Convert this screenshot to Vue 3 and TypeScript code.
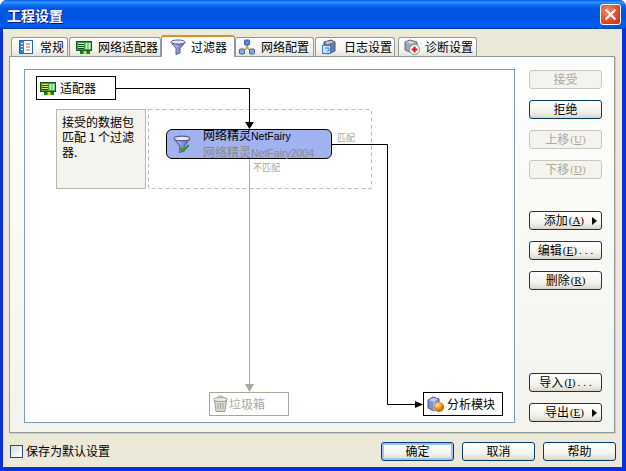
<script setup lang="ts">
interface SideButton {
  label: string;
  key?: string;
  dots?: boolean;
  disabled?: boolean;
  arrow?: boolean;
}

const tabs = [
  { id: 'general', label: '常规', width: 57, pad: 6, gap: 6 },
  { id: 'adapter', label: '网络适配器', width: 92, pad: 6, gap: 6 },
  { id: 'filter', label: '过滤器', width: 74, pad: 8, gap: 5, active: true },
  { id: 'network', label: '网络配置', width: 79, pad: 3, gap: 6 },
  { id: 'log', label: '日志设置', width: 80, pad: 5, gap: 7 },
  { id: 'diag', label: '诊断设置', width: 79, pad: 5, gap: 5 }
];

const topButtons: SideButton[] = [
  { label: '接受', disabled: true },
  { label: '拒绝' },
  { label: '上移', key: 'U', disabled: true },
  { label: '下移', key: 'D', disabled: true }
];

const midButtons: SideButton[] = [
  { label: '添加', key: 'A', arrow: true },
  { label: '编辑', key: 'E', dots: true },
  { label: '删除', key: 'R' }
];

const lowButtons: SideButton[] = [
  { label: '导入', key: 'I', dots: true },
  { label: '导出', key: 'E', arrow: true }
];

const sideGroups = [
  { name: 'top', items: topButtons },
  { name: 'mid', items: midButtons },
  { name: 'low', items: lowButtons }
];
</script>

<template>
  <div class="window">
    <div class="titlebar">
      <span class="title">工程设置</span>
      <div class="close">
        <svg width="13" height="13" viewBox="0 0 13 13">
          <path d="M1.500 1.500l10 10M11.500 1.500l-10 10" stroke="#fff" stroke-width="2.400" fill="none" />
        </svg>
      </div>
    </div>

    <div class="body">
      <div class="tabs">
        <div
          v-for="tab in tabs"
          :key="tab.id"
          class="tab"
          :class="{ active: tab.active }"
          :style="{ width: tab.width + 'px', paddingLeft: tab.pad + 'px', gap: tab.gap + 'px' }"
        >
          <svg v-if="tab.id === 'general'" class="tab_icon" width="16" height="16" viewBox="0 0 16 16">
            <rect x="1.500" y="1.500" width="13" height="13" fill="#fff" stroke="#1f62c8" />
            <rect x="2" y="2" width="4" height="12" fill="#2a80e8" />
            <path d="M3 4.500h2M3 7.500h2M3 10.500h2" stroke="#fff" />
            <path d="M8 5h4" stroke="#d04848" />
            <path d="M8 8h2" stroke="#d04848" />
            <path d="M10 8h2M8 11h4" stroke="#7c7ca8" />
          </svg>
          <svg v-else-if="tab.id === 'adapter'" class="tab_icon" width="16" height="16" viewBox="0 0 16 16">
            <use href="#adapter_icon" />
          </svg>
          <svg v-else-if="tab.id === 'filter'" class="tab_icon" width="16" height="16" viewBox="0 0 16 16">
            <use href="#funnel_icon" />
          </svg>
          <svg v-else-if="tab.id === 'network'" class="tab_icon" width="16" height="16" viewBox="0 0 16 16">
            <path d="M8 5v4M4 12l4-3 4 3" stroke="#6a5a20" fill="none" />
            <rect x="5.500" y="1" width="5" height="5" rx="1" fill="#4f8fe8" stroke="#34589c" />
            <rect x="0.500" y="10" width="5" height="5" rx="1" fill="#7fa6e6" stroke="#43639c" />
            <rect x="10.500" y="10" width="5" height="5" rx="1" fill="#7fa6e6" stroke="#43639c" />
            <rect x="6.500" y="8" width="3" height="2" fill="#e0a818" />
          </svg>
          <svg v-else-if="tab.id === 'log'" class="tab_icon" width="16" height="16" viewBox="0 0 16 16">
            <path d="M3 3l7-2 4 2v9l-7 3-4-2z" fill="#6f7ba4" stroke="#46527c" />
            <path d="M4 3l6-1 3 1-7 2z" fill="#c6cce0" />
            <rect x="1.500" y="6.500" width="8" height="8" fill="#cfe4fb" stroke="#2f80e0" />
            <path d="M4 9h4v3H6" stroke="#2f80e0" fill="none" />
          </svg>
          <svg v-else class="tab_icon" width="16" height="16" viewBox="0 0 16 16">
            <path d="M1 3l5-2 7 2v6l-5 5-7-3z" fill="#9ea3b8" stroke="#666b82" />
            <path d="M2 3l4-1 5 1-4 2z" fill="#d6d8e2" />
            <circle cx="10.500" cy="10.500" r="5" fill="#fff" stroke="#7a9a7a" />
            <path d="M10.500 7.500v6M7.500 10.500h6" stroke="#e01818" stroke-width="2.200" />
          </svg>
          <span class="tab_label">{{ tab.label }}</span>
        </div>
      </div>

      <div class="panel">
        <div class="canvas">
          <svg class="wires" width="491" height="354" viewBox="0 0 491 354">
            <rect x="124.500" y="40.500" width="223" height="79" fill="none" stroke="#b8b8b0" stroke-dasharray="4 3" />
            <path d="M225.500 90v226" stroke="#aca899" fill="none" />
            <path d="M221 315h9l-4.500 8z" fill="#aca899" />
            <path d="M92 19.500h133.500V54" stroke="#000" fill="none" />
            <path d="M221 53h9l-4.500 7z" fill="#000" />
            <path d="M308 75.500h55.500v260H392" stroke="#000" fill="none" />
            <path d="M391 332v7l8-3.500z" fill="#000" />
          </svg>

          <div class="node adapter_node">
            <svg width="16" height="16" viewBox="0 0 16 16"><use href="#adapter_icon" /></svg>
            <span>适配器</span>
          </div>

          <div class="info">接受的数据包匹配 1 个过滤器.</div>

          <div class="filter_node">
            <svg class="filter_icon" width="18" height="18" viewBox="0 0 16 16">
              <use href="#funnel_icon" />
              <path d="M6.500 11.500l2.500 2.500 5-5" stroke="#2f9a20" stroke-width="2" fill="none" />
            </svg>
            <div class="filter_names">
              <span>网络精灵<span class="latin">NetFairy</span></span>
              <span class="old_name">网络精灵<span class="latin">NetFairy2004</span></span>
            </div>
          </div>

          <span class="wire_label match">匹配</span>
          <span class="wire_label no_match">不匹配</span>

          <div class="node trash_node">
            <svg width="17" height="18" viewBox="0 0 17 18">
              <path d="M2.500 5h12l-1.500 11.500h-9z" fill="#dcdad0" stroke="#a09e92" />
              <ellipse cx="8.500" cy="4.500" rx="7" ry="2" fill="#ecebe4" stroke="#a09e92" />
              <path d="M6 2.500l1-1.500h3l1 1.500" fill="none" stroke="#a09e92" />
              <path d="M6 8v6M8.500 8v6M11 8v6" stroke="#a09e92" />
            </svg>
            <span>垃圾箱</span>
          </div>

          <div class="node module_node">
            <svg width="18" height="18" viewBox="0 0 18 18">
              <path d="M1 5l5-3 6 2v9l-5 3-6-3z" fill="#7e8fd0" stroke="#47578f" />
              <path d="M7 6v10" stroke="#c8d0f0" />
              <path d="M2 5l5 2 4-3-5-1z" fill="#c4ccec" />
              <circle cx="12" cy="12" r="5" fill="url(#ball)" />
            </svg>
            <span>分析模块</span>
          </div>
        </div>

        <div class="side">
          <div v-for="group in sideGroups" :key="group.name" class="side_group" :class="group.name">
            <div
              v-for="btn in group.items"
              :key="btn.label"
              class="btn"
              :class="{ disabled: btn.disabled, with_arrow: btn.arrow }"
            >
              <span>{{ btn.label }}</span>
              <span v-if="btn.key" class="mnemonic">(<u>{{ btn.key }}</u>)</span>
              <span v-if="btn.dots" class="dots">...</span>
              <i v-if="btn.arrow" class="arrow"></i>
            </div>
          </div>
        </div>
      </div>

      <div class="footer">
        <label class="check">
          <i class="check_box"></i>
          <span>保存为默认设置</span>
        </label>
        <div class="footer_buttons">
          <div class="btn default">确定</div>
          <div class="btn">取消</div>
          <div class="btn">帮助</div>
        </div>
      </div>
    </div>

    <svg width="0" height="0" class="defs">
      <defs>
        <radialGradient id="ball" cx="0.35" cy="0.3" r="0.8">
          <stop offset="0" stop-color="#ffe2a0" />
          <stop offset="0.5" stop-color="#f08c10" />
          <stop offset="1" stop-color="#a84800" />
        </radialGradient>
        <linearGradient id="funnel_body" x1="0" y1="0" x2="1" y2="0">
          <stop offset="0" stop-color="#c9ccf0" />
          <stop offset="0.5" stop-color="#8f95d8" />
          <stop offset="1" stop-color="#5e64a8" />
        </linearGradient>
      </defs>
      <symbol id="adapter_icon" viewBox="0 0 16 16">
        <rect x="0.500" y="2.500" width="15" height="9" fill="#36a83c" stroke="#0f5a18" />
        <rect x="2" y="4" width="6" height="6" fill="#e6ea50" />
        <path d="M2 5.500h6M2 7.500h6M2 9.500h6" stroke="#124a1a" />
        <rect x="9.500" y="4" width="2" height="6" fill="#d8f4d8" />
        <rect x="12.500" y="4" width="2" height="6" fill="#d8f4d8" />
        <rect x="4" y="12" width="10" height="3" fill="#1e7a28" />
        <rect x="7.500" y="12" width="3" height="3" fill="#f2d81c" />
      </symbol>
      <symbol id="funnel_icon" viewBox="0 0 16 16">
        <path d="M1 3.500c2 2 12 2 14 0l-5 6v4.500l-4 1.500V9.500z" fill="url(#funnel_body)" stroke="#5a6098" />
        <ellipse cx="8" cy="3" rx="7" ry="2" fill="#e6e8fa" stroke="#5a6098" />
      </symbol>
    </svg>
  </div>
</template>

<style>
html,
body {
  margin: 0;
  background: #fff;
}
</style>

<style scoped>
.window {
  width: 626px;
  height: 471px;
  box-sizing: border-box;
  display: flex;
  flex-direction: column;
  overflow: hidden;
  border-radius: 7px 7px 0 0;
  background: #0831d9;
  font-family: "Noto Sans CJK SC", "Liberation Sans", sans-serif;
  font-size: 12px;
  color: #000;
  line-height: 14px;
}

.titlebar {
  height: 29px;
  flex: none;
  display: flex;
  align-items: center;
  justify-content: space-between;
  padding: 0 5px 0 7px;
  background: linear-gradient(
    to bottom,
    #0058ee 0,
    #3593ff 2px,
    #288eff 3px,
    #0f6df0 5px,
    #0055e5 9px,
    #0054e3 17px,
    #0060f0 24px,
    #0055e5 27px,
    #0040c0 29px
  );
}

.title {
  color: #fff;
  font-size: 14px;
  font-weight: 700;
  text-shadow: 1px 1px 0 #0f1089;
}

.close {
  width: 21px;
  height: 21px;
  box-sizing: border-box;
  display: flex;
  align-items: center;
  justify-content: center;
  border: 1px solid #fff;
  border-radius: 3px;
  background: radial-gradient(circle at 35% 30%, #ee8a6a, #dd4a22 60%, #c23410);
}

.body {
  flex: 1;
  display: flex;
  flex-direction: column;
  margin: 0 4px 4px 3px;
  padding: 6px 7px 0 6px;
  background: #ece9d8;
  min-height: 0;
}

.tabs {
  height: 21px;
  flex: none;
  display: flex;
  align-items: flex-end;
  padding-left: 2px;
  gap: 1px;
  position: relative;
  z-index: 1;
}

.tab {
  height: 19px;
  box-sizing: border-box;
  display: flex;
  align-items: center;
  border: 1px solid #919b9c;
  border-bottom: 0;
  border-radius: 3px 3px 0 0;
  background: linear-gradient(to bottom, #fff, #f3f3ef 70%, #e6e4d8);
  white-space: nowrap;
}

.tab:last-child {
  margin-left: 2px;
}

.tab.active {
  height: 22px;
  margin: 0 -1px -1px -1px;
  background: #fff;
  border-top: 2px solid #e68b2c;
  position: relative;
  z-index: 2;
}

.tab_icon {
  flex: none;
}

.panel {
  width: 606px;
  height: 377px;
  flex: none;
  box-sizing: border-box;
  display: flex;
  border: 1px solid #919b9c;
  box-shadow: 1px 1px 0 #d0cebf;
  padding: 12px 13px 10px 14px;
  gap: 14px;
  background: linear-gradient(to bottom, #fff 0, #fbfbf8 30%, #f4f3ee 100%);
}

.canvas {
  width: 491px;
  height: 354px;
  flex: none;
  box-sizing: border-box;
  position: relative;
  border: 1px solid #7f9db9;
  background: #fff;
}

.wires {
  position: absolute;
  left: -1px;
  top: -1px;
}

.node {
  position: absolute;
  width: 80px;
  height: 24px;
  box-sizing: border-box;
  display: flex;
  align-items: center;
  padding-left: 3px;
  border: 1px solid #000;
  background: #fff;
}

.adapter_node {
  left: 11px;
  top: 6px;
  gap: 4px;
}

.trash_node {
  left: 184px;
  top: 322px;
  padding-left: 2px;
  border: 1px solid #aca899;
  color: #aca899;
}

.module_node {
  left: 398px;
  top: 322px;
  gap: 2px;
}

.info {
  position: absolute;
  left: 31px;
  top: 39px;
  width: 90px;
  height: 80px;
  box-sizing: border-box;
  padding: 4px 5px;
  border: 1px solid #b8b8b0;
  background: #f4f3ee;
  line-height: 15px;
}

.filter_node {
  position: absolute;
  left: 141px;
  top: 59px;
  width: 166px;
  height: 30px;
  box-sizing: border-box;
  display: flex;
  align-items: center;
  padding-left: 6px;
  gap: 12px;
  border: 1px solid #000;
  border-radius: 6px;
  background: #a2b2ee;
}

.filter_icon {
  flex: none;
}

.filter_names {
  display: flex;
  flex-direction: column;
  line-height: 15px;
  white-space: nowrap;
}

.latin {
  font-family: "Liberation Sans", sans-serif;
  font-size: 10.500px;
}

.old_name {
  color: #8a8a8a;
}

.wire_label {
  position: absolute;
  color: #aca899;
  font-size: 9px;
  line-height: 10px;
}

.match {
  left: 312px;
  top: 63px;
}

.no_match {
  left: 228px;
  top: 93px;
}

.side {
  width: 73px;
  flex: none;
  display: flex;
  flex-direction: column;
  padding-top: 1px;
}

.side_group {
  display: flex;
  flex-direction: column;
  gap: 11px;
}

.side_group.mid {
  margin-top: 32px;
}

.side_group.low {
  margin-top: auto;
}

.btn {
  height: 19px;
  box-sizing: border-box;
  display: flex;
  align-items: center;
  justify-content: center;
  padding-bottom: 2px;
  border: 1px solid #003c74;
  border-radius: 3px;
  background: linear-gradient(to bottom, #fff, #f4f4ee 60%, #e3e0d3 90%, #d6d0c5);
  white-space: nowrap;
}

.btn.disabled {
  border-color: #c9c7ba;
  background: #f4f3ee;
  color: #aca899;
}

.btn.with_arrow {
  justify-content: flex-end;
  padding-right: 4px;
}

.mnemonic {
  margin-left: 1px;
  font-family: "Liberation Serif", serif;
  font-size: 11px;
}

.dots {
  font-family: "Liberation Serif", serif;
  font-size: 11px;
  letter-spacing: 3px;
  margin-left: 2px;
  margin-right: -3px;
}

.btn.default {
  box-shadow: inset 0 0 0 2px #a5c0ee;
}

.arrow {
  width: 0;
  height: 0;
  margin-left: 8px;
  margin-top: 2px;
  border-style: solid;
  border-width: 4px 0 4px 5px;
  border-color: transparent transparent transparent #000;
}

.footer {
  flex: 1;
  display: flex;
  align-items: flex-start;
  justify-content: space-between;
  padding-top: 9px;
}

.check {
  display: flex;
  align-items: center;
  gap: 3px;
  margin-top: 2px;
  margin-left: 1px;
}

.check_box {
  width: 13px;
  height: 13px;
  box-sizing: border-box;
  border: 1px solid #1c5180;
  background: linear-gradient(135deg, #dcdcd7, #fff);
}

.footer_buttons {
  display: flex;
  gap: 8px;
  margin-right: -1px;
}

.footer_buttons .btn {
  width: 73px;
}

.defs {
  position: absolute;
}
</style>
